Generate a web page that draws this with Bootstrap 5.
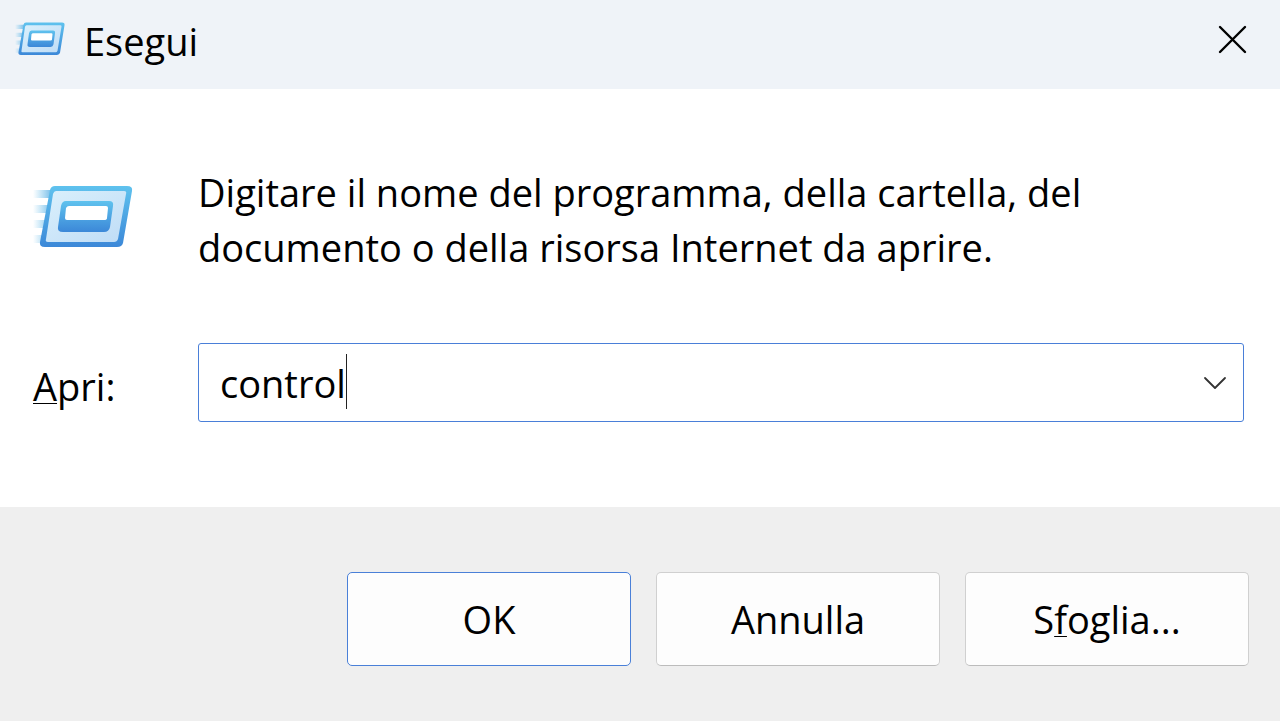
<!DOCTYPE html>
<html lang="it">
<head>
<meta charset="utf-8">
<meta name="viewport" content="width=device-width, initial-scale=1">
<title>Esegui</title>
<link rel="stylesheet" href="https://cdn.jsdelivr.net/npm/bootstrap@5.3.0/dist/css/bootstrap.min.css">
<style>
  body { font-family: "Open Sans", "Noto Sans", sans-serif; font-size: 38px; line-height: 55px; color: #000; background: #fff; }
  .titlebar { background: #eff3f8; height: 89px; padding: 0 32px 11px 15px; }
  .titlebar h1 { font-size: 38px; line-height: 48px; font-weight: 400; padding: 4px 0 0 19px; }
  .close-btn { line-height: 0; color: #000; }
  .fields { display: grid; grid-template-columns: 165px 1fr; padding: 76px 36px 85px 33px; row-gap: 68px; }
  .combo { height: 79px; border: 1px solid #4a7fd8; border-radius: 3px; }
  .combo input { font-size: 38px; line-height: 55px; color: #000; padding: 2px 20px 0 21px; border: 0; background: none; outline: 0; min-width: 0; }
  .caret-line { left: 147px; top: 10px; width: 1px; height: 55px; background: #222; }
  .drop-btn { line-height: 0; padding: 0 16px; }
  .actions { background: #efefef; padding: 65px 31px 56px; gap: 25px; }
  .dialog-btn { width: 284px; height: 94px; font-size: 38px; line-height: 55px; padding: 0; color: #000; background: #fdfdfd; border: 1px solid #d0d0d0; border-bottom-color: #bcbcbc; border-radius: 5px; }
  .dialog-btn.default { border-color: #4a80d8; }
  .key { text-decoration: underline; text-decoration-thickness: 1px; text-underline-offset: 2px; text-decoration-skip-ink: none; }
</style>
</head>
<body>
<svg width="0" height="0" class="position-absolute" aria-hidden="true">
  <defs>
    <linearGradient id="rim" x1="0" y1="0" x2="0" y2="1"><stop offset="0" stop-color="#5fc2ee"/><stop offset="1" stop-color="#3c88d8"/></linearGradient>
    <linearGradient id="face" x1="0" y1="0" x2="1" y2="1"><stop offset="0" stop-color="#daf0fc"/><stop offset="1" stop-color="#bfdcf6"/></linearGradient>
    <linearGradient id="trail" x1="0" y1="0" x2="1" y2="0"><stop offset="0" stop-color="#7cc8ee" stop-opacity="0"/><stop offset="1" stop-color="#69b5e6"/></linearGradient>
    <symbol id="run" viewBox="0 0 100 64" preserveAspectRatio="none">
      <path fill="url(#trail)" d="M0 5h20v8H0zM0 20h17v8H0zM0 35h14v8H0zM0 50h12v8H0z"/>
      <path fill="url(#rim)" d="M22 1H94Q100 1 99 6L90 58Q89 62 84 62H12Q6 62 7 57L17 5Q18 1 22 1Z"/>
      <path fill="url(#face)" d="M23 6H91Q94 6 93 9L85 54Q84 57 81 57H15Q12 57 13 54L20 9Q21 6 23 6Z"/>
      <path fill="url(#rim)" d="M33 16H76Q81 16 80 21L77 42Q76 47 71 47H30Q24 47 25 42L28 21Q29 16 33 16Z"/>
      <path fill="#fff" d="M36 21H73Q75 21 75 23L74 33Q74 35 71 35H34Q32 35 32 33L33 23Q34 21 36 21Z"/>
    </symbol>
  </defs>
</svg>
<main class="d-flex flex-column min-vh-100">
  <header class="titlebar d-flex align-items-center">
    <svg width="50" height="34" aria-hidden="true"><use href="#run"/></svg>
    <h1 class="m-0 flex-grow-1">Esegui</h1>
    <button type="button" class="close-btn btn p-0 border-0" aria-label="Chiudi">
      <svg width="30" height="30" viewBox="0 0 30 30" fill="none" stroke="#000" stroke-width="2.4" stroke-linecap="round"><path d="M2 3 27 28M27 3 2 28"/></svg>
    </button>
  </header>
  <form class="d-flex flex-column flex-grow-1 m-0">
    <div class="fields">
      <svg class="mt-3 pt-1" width="100" height="68" aria-hidden="true"><use href="#run"/></svg>
      <p class="m-0">Digitare il nome del programma, della cartella, del<br>documento o della risorsa Internet da aprire.</p>
      <label for="cmd" class="align-self-center pt-2"><span class="key">A</span>pri:</label>
      <div class="combo d-flex position-relative">
        <input id="cmd" type="text" class="flex-grow-1" value="control" autocomplete="off" spellcheck="false">
        <span class="caret-line position-absolute" aria-hidden="true"></span>
        <button type="button" class="drop-btn btn border-0" aria-label="Mostra elenco">
          <svg width="24" height="16" viewBox="0 0 24 16" fill="none" stroke="#333" stroke-width="1.8" stroke-linecap="round" stroke-linejoin="round"><path d="M2 3 12 13 22 3"/></svg>
        </button>
      </div>
    </div>
    <div class="actions d-flex justify-content-end align-items-start flex-grow-1">
      <button type="submit" class="dialog-btn default btn">OK</button>
      <button type="button" class="dialog-btn btn">Annulla</button>
      <button type="button" class="dialog-btn btn">S<span class="key">f</span>oglia...</button>
    </div>
  </form>
</main>
<script src="https://cdn.jsdelivr.net/npm/bootstrap@5.3.0/dist/js/bootstrap.bundle.min.js"></script>
</body>
</html>
